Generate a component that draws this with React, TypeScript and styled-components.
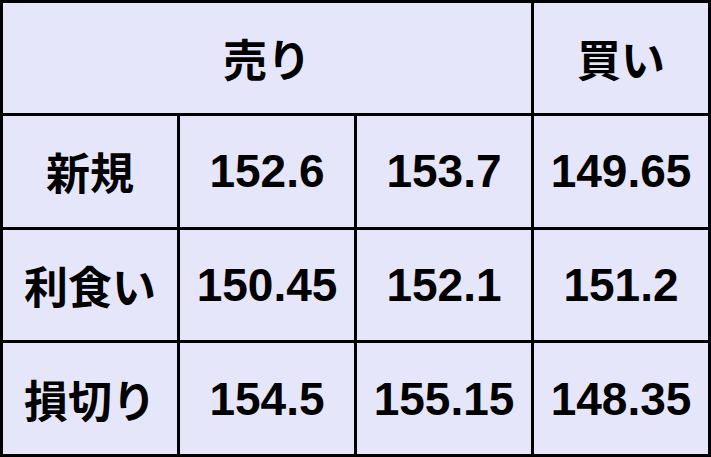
import styled, { createGlobalStyle } from "styled-components";

const GlobalStyle = createGlobalStyle`
  html, body {
    margin: 0;
    padding: 0;
    background: #e6e6fa;
  }
`;

const PriceTable = styled.table`
  width: 711px;
  height: 457px;
  border-collapse: collapse;
  table-layout: fixed;
  background: #e6e6fa;
  font-family: "Liberation Sans", Arial, "Noto Sans CJK JP", sans-serif;
  color: #000;
`;

const Row = styled.tr`
  height: 113px;
`;

const HeadCell = styled.th`
  border: 3px solid #000;
  font-family: "Noto Sans CJK JP", sans-serif;
  font-size: 44px;
  font-weight: 700;
  text-align: center;
  vertical-align: middle;
  padding: 0;
`;

const LabelCell = styled.th`
  border: 3px solid #000;
  font-family: "Noto Sans CJK JP", sans-serif;
  font-size: 44px;
  font-weight: 700;
  text-align: center;
  vertical-align: middle;
  padding: 0;
`;

const ValueCell = styled.td`
  border: 3px solid #000;
  font-size: 46px;
  font-weight: 700;
  text-align: center;
  vertical-align: middle;
  padding: 0;
  white-space: nowrap;
`;

const rows = [
  { label: "新規", values: ["152.6", "153.7", "149.65"] },
  { label: "利食い", values: ["150.45", "152.1", "151.2"] },
  { label: "損切り", values: ["154.5", "155.15", "148.35"] },
];

const App = () => {
  return (
    <>
      <GlobalStyle />
      <PriceTable>
        <colgroup>
          <col />
          <col />
          <col />
          <col />
        </colgroup>
        <thead>
          <Row>
            <HeadCell colSpan={3}>売り</HeadCell>
            <HeadCell>買い</HeadCell>
          </Row>
        </thead>
        <tbody>
          {rows.map((row) => (
            <Row key={row.label}>
              <LabelCell>{row.label}</LabelCell>
              {row.values.map((v, i) => (
                <ValueCell key={i}>{v}</ValueCell>
              ))}
            </Row>
          ))}
        </tbody>
      </PriceTable>
    </>
  );
};

export default App;
